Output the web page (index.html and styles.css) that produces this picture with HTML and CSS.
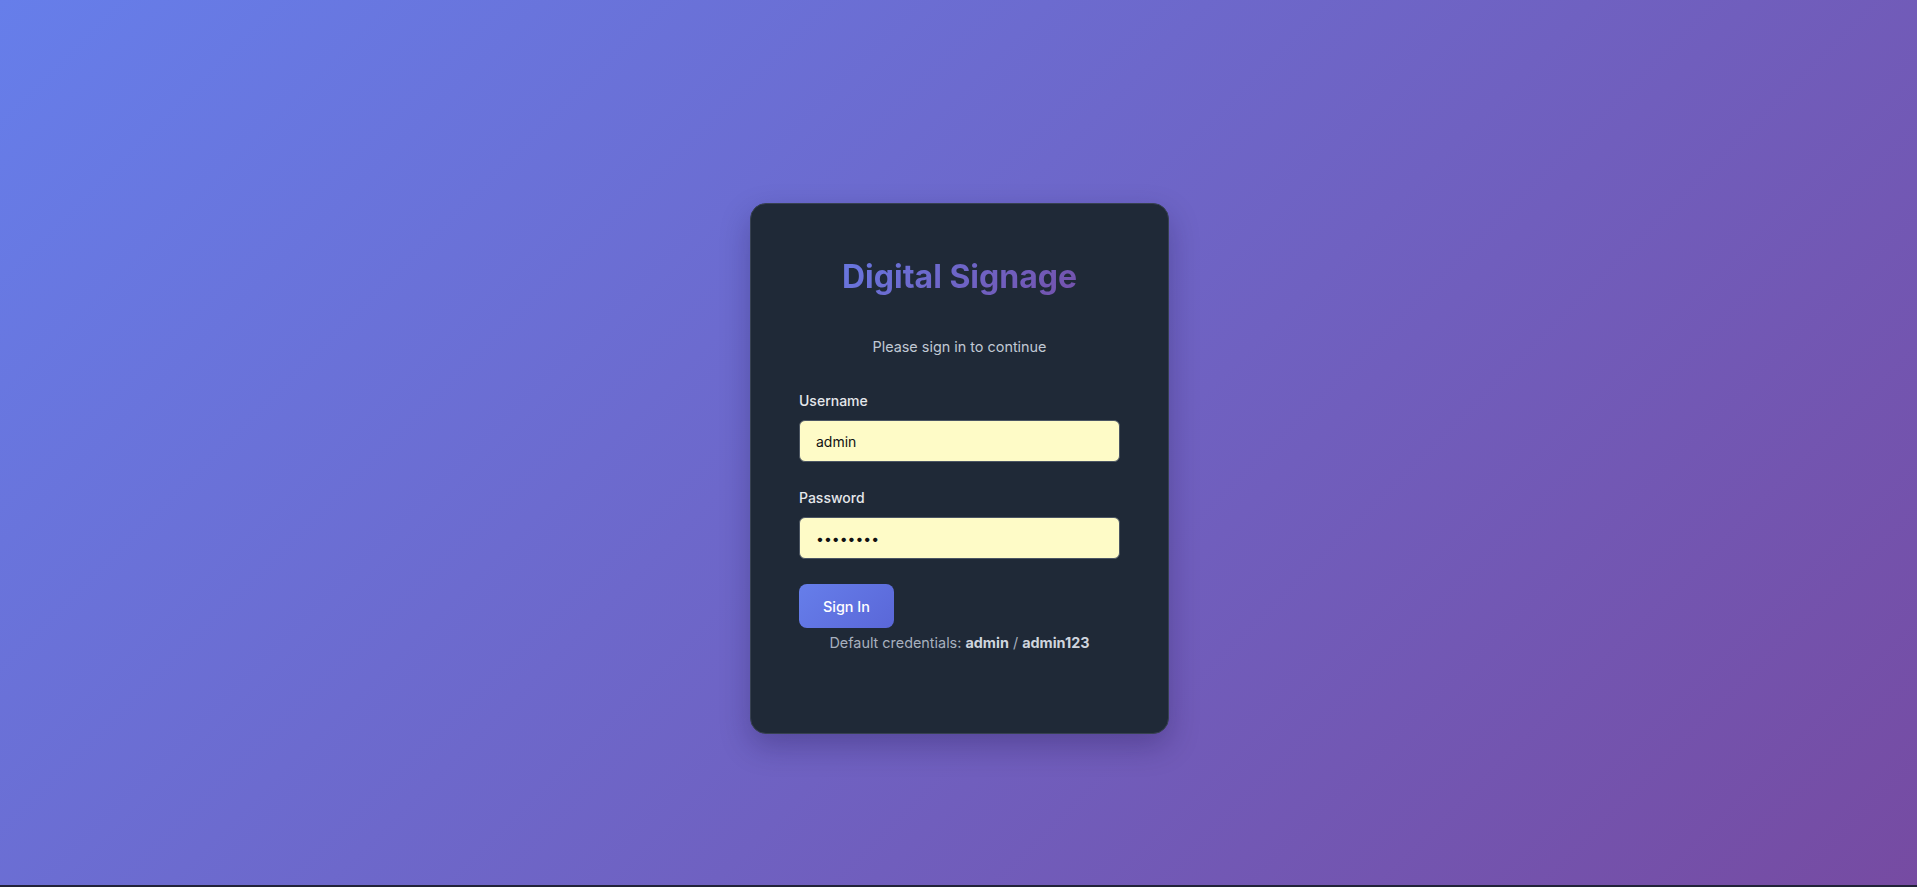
FILE: index.html
```html
<!DOCTYPE html>
<html lang="en">
<head>
<meta charset="utf-8">
<title>Digital Signage - Sign In</title>
<link rel="stylesheet" href="styles.css">
</head>
<body>
<div class="page">
  <div class="card">
    <h1 class="title">Digital Signage</h1>
    <p class="subtitle">Please sign in to continue</p>
    <form class="form">
      <div class="group">
        <label class="label" for="u">Username</label>
        <input class="input" id="u" type="text" value="admin">
      </div>
      <div class="group">
        <label class="label" for="p">Password</label>
        <input class="input" id="p" type="password" value="admin123">
      </div>
      <button class="btn" type="button">Sign In</button>
      <p class="hint">Default credentials: <strong>admin</strong> / <strong>admin123</strong></p>
    </form>
  </div>
</div>
</body>
</html>
```

FILE: styles.css
```css
* { box-sizing: border-box; }
html, body { margin: 0; padding: 0; }
body {
  background: #22233a;
  font-family: Inter, "Noto Sans", sans-serif;
  height: 887px;
}
.page {
  height: calc(100vh - 2px);
  background: linear-gradient(135deg, #667eea 0%, #764ba2 100%);
  display: flex;
  justify-content: center;
  align-items: center;
  padding-top: 52px;
  padding-left: 2px;
}
.card {
  width: 419px;
  background: #1f2937;
  border: 1px solid #374151;
  border-radius: 16px;
  padding: 48px 48px 80px;
  box-shadow: 0 12px 30px rgba(20, 10, 60, 0.28);
}
.title {
  margin: 0 0 35px;
  padding-top: 1px;
  font-size: 32px;
  line-height: 48px;
  font-weight: 700;
  text-align: center;
  background: linear-gradient(135deg, #667eea 0%, #764ba2 100%);
  -webkit-background-clip: text;
  background-clip: text;
  color: transparent;
}
.subtitle {
  margin: 0 0 32px;
  font-size: 14.4px;
  line-height: 22.5px;
  text-align: center;
  color: #c0c8d4;
}
.form { margin: 0; }
.group { margin-bottom: 25px; }
.label {
  display: block;
  font-size: 14px;
  line-height: 21px;
  font-weight: 500;
  color: #e5e7eb;
  margin-bottom: 9px;
}
.input {
  display: block;
  width: 100%;
  height: 42px;
  padding: 0 16px;
  font-family: Inter, "Noto Sans", sans-serif;
  font-size: 14px;
  color: #111;
  background: #fefbc7;
  border: 1px solid #4b5563;
  border-radius: 6px;
  outline: none;
}
.btn {
  display: block;
  height: 44px;
  padding: 0 24px;
  font-family: Inter, "Noto Sans", sans-serif;
  font-size: 14.4px;
  font-weight: 500;
  color: #ffffff;
  background: linear-gradient(135deg, #667eea 0%, #5a67d8 100%);
  border: none;
  border-radius: 8px;
  margin: 0 0 4px;
}
.hint {
  margin: 0;
  font-size: 14.4px;
  line-height: 21px;
  text-align: center;
  color: #a7b0be;
}
.hint strong {
  font-weight: 700;
  color: #cfd5de;
}
```
